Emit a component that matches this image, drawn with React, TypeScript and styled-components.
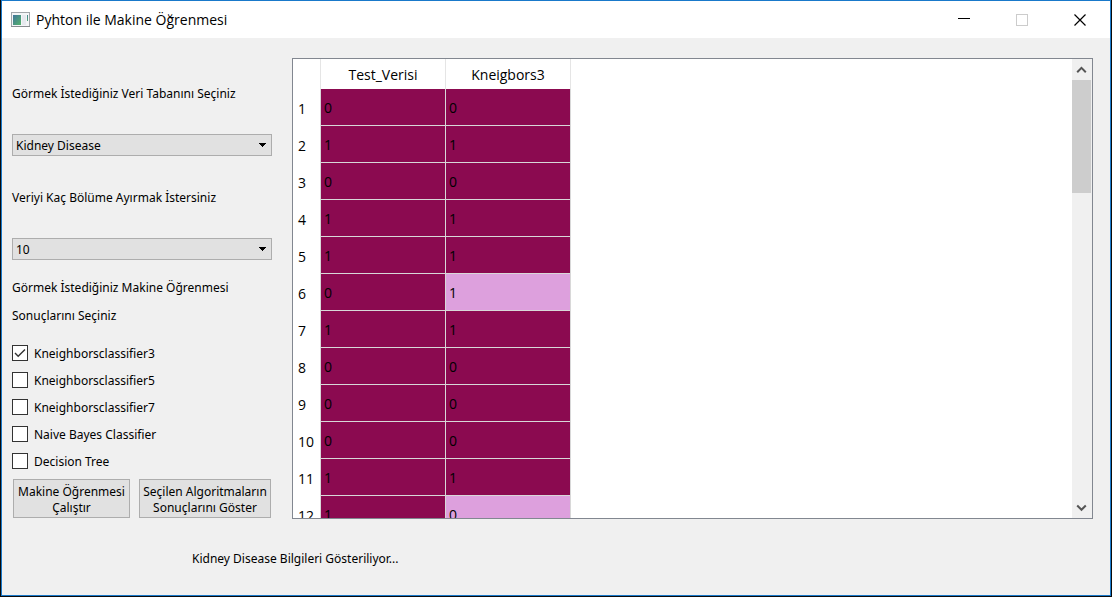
import React, { useState } from "react";
import styled, { createGlobalStyle } from "styled-components";

const uiFont = `"Noto Sans", "Open Sans", sans-serif`;
const headFont = `"Open Sans", "Noto Sans", sans-serif`;

const GlobalStyle = createGlobalStyle`
  * { box-sizing: border-box; }
  body { margin: 0; background: #0a0a0a; color: #000; }
  button, select, input { font: inherit; color: inherit; }
`;

const Desktop = styled.div`
  display: flex;
  height: 100vh;
  padding: 0 1px 1px;
`;

const Window = styled.div`
  flex: 1;
  min-width: 0;
  display: flex;
  flex-direction: column;
  border: 1px solid #1979ca;
  background: #f0f0f0;
  font-family: ${uiFont};
  font-size: 12px;
  line-height: 22px;
`;

const TitleBar = styled.header`
  display: flex;
  align-items: center;
  height: 37px;
  flex: none;
  padding: 0 1px 0 9px;
  background: #fff;
`;

const Title = styled.h1`
  flex: 1;
  margin: 0 0 0 6px;
  font: 400 14px/20px ${headFont};
`;

const WindowButton = styled.button`
  display: grid;
  place-items: center;
  width: 58px;
  height: 37px;
  padding: 0;
  border: 0;
  background: none;
`;

const Main = styled.main`
  flex: 1;
  min-height: 0;
  display: grid;
  grid-template-columns: 260px minmax(0, 1fr);
  grid-template-rows: minmax(0, 1fr);
  column-gap: 20px;
  padding: 20px 17px 0 10px;
`;

const Sidebar = styled.form`
  display: flex;
  flex-direction: column;
  padding-top: 25px;
`;

const Field = styled.div`
  display: flex;
  flex-direction: column;
  gap: 29px;
  margin-bottom: 31px;
`;

const SelectBox = styled.div`
  display: grid;
  align-items: center;

  & > * { grid-area: 1 / 1; }
  & > svg { justify-self: end; margin-right: 6px; pointer-events: none; }
`;

const Select = styled.select`
  appearance: none;
  width: 100%;
  height: 22px;
  padding: 1px 20px 0 3px;
  border: 1px solid #adadad;
  border-radius: 0;
  background: #e1e1e1;
  line-height: 20px;
`;

const Choices = styled.fieldset`
  margin: -17px 0 5px;
  padding: 0;
  border: 0;
`;

const Legend = styled.legend`
  width: 230px;
  margin-bottom: 9px;
  padding: 0;
  line-height: 28px;
`;

const Choice = styled.label`
  display: flex;
  align-items: center;
  gap: 6px;
  height: 27px;
`;

const ChoiceName = styled.span`
  padding-top: 2px;
`;

const Tick = styled.input`
  appearance: none;
  width: 16px;
  height: 16px;
  margin: 0;
  border: 1px solid #333;
  background: #fff;

  &:checked {
    background: #fff
      url("data:image/svg+xml,%3Csvg xmlns='http://www.w3.org/2000/svg' viewBox='0 0 14 14'%3E%3Cpath d='M2 7l3.200 3.300L12 3.500' fill='none' stroke='%23333' stroke-width='1.400'/%3E%3C/svg%3E");
  }
`;

const Actions = styled.div`
  display: flex;
  justify-content: space-between;
  padding: 0 1px;
`;

const Action = styled.button<{ $width: number }>`
  width: ${(p) => p.$width}px;
  height: 39px;
  padding: 2px 0 0;
  border: 1px solid #adadad;
  background: #e1e1e1;
  line-height: 16px;
  white-space: pre;
`;

const TableFrame = styled.section`
  display: flex;
  justify-content: space-between;
  overflow: hidden;
  border: 1px solid #828790;
  background: #fff;
`;

const Table = styled.table`
  width: 278px;
  height: max-content;
  table-layout: fixed;
  border-collapse: separate;
  border-spacing: 0;
  font: 400 14px/20px ${headFont};
`;

const ColumnHead = styled.th`
  height: 30px;
  padding: 2px 0 0;
  border-right: 1px solid #e5e5e5;
  font-weight: 400;
  text-align: center;
`;

const CornerHead = styled(ColumnHead)`
  width: 28px;
`;

const RowHead = styled.th`
  height: 37px;
  padding: 2px 0 0 5px;
  border-right: 1px solid #d8d8d8;
  font-weight: 400;
  text-align: left;
`;

const Cell = styled.td<{ $differs?: boolean }>`
  height: 37px;
  padding: 1px 3px 0;
  border-right: 1px solid #d8d8d8;
  border-bottom: 1px solid #d8d8d8;
  background: ${(p) => (p.$differs ? "#dda0dd" : "#8b0a50")};
`;

const ScrollBar = styled.div`
  display: flex;
  flex-direction: column;
  width: 20px;
  padding-right: 1px;
  background: #f0f0f0;
`;

const ScrollButton = styled.button`
  display: grid;
  place-items: center;
  height: 21px;
  padding: 0;
  border: 0;
  background: none;
`;

const ScrollTrack = styled.div`
  flex: 1;
`;

const ScrollThumb = styled.div`
  height: 27%;
  background: #cdcdcd;
`;

const Status = styled.footer`
  flex: none;
  padding: 29px 20px 25px 190px;
`;

const algorithms = [
  "Kneighborsclassifier3",
  "Kneighborsclassifier5",
  "Kneighborsclassifier7",
  "Naive Bayes Classifier",
  "Decision Tree",
];

const results = [
  [0, 0], [1, 1], [0, 0], [1, 1], [1, 1], [0, 1],
  [1, 1], [0, 0], [0, 0], [0, 0], [1, 1], [1, 0],
];

const AppIcon = () => (
  <svg width="19" height="15" viewBox="0 0 19 15" aria-hidden="true">
    <defs>
      <linearGradient id="pane" x1="0" y1="0" x2="1" y2="1">
        <stop offset="0" stopColor="#41759b" />
        <stop offset="1" stopColor="#55b36b" />
      </linearGradient>
    </defs>
    <rect x=".5" y=".5" width="18" height="14" fill="#f4f5f7" stroke="#a2a6aa" />
    <path d="M0 14.500h19" stroke="#888c90" />
    <rect x="2" y="3" width="8" height="10" fill="url(#pane)" />
    <rect x="11" y="3" width="4" height="10" fill="#e6e9ee" />
    <rect x="16" y="3" width="1" height="6" fill="url(#pane)" />
  </svg>
);

const DropArrow = () => (
  <svg width="7" height="4" viewBox="0 0 7 4" shapeRendering="crispEdges" aria-hidden="true">
    <path d="M0 0h7v1H6v1H5v1H4v1H3V3H2V2H1V1H0z" />
  </svg>
);

const Chevron = ({ down = false }: { down?: boolean }) => (
  <svg width="11" height="8" viewBox="0 0 11 8" aria-hidden="true">
    <path
      d={down ? "M1.200 1.500L5.500 5.800L9.800 1.500" : "M1.200 6.200L5.500 1.900L9.800 6.200"}
      fill="none"
      stroke="#555"
      strokeWidth="2"
    />
  </svg>
);

export default function App() {
  const [selected, setSelected] = useState<string[]>([algorithms[0]]);
  const toggle = (name: string) =>
    setSelected((s) => (s.includes(name) ? s.filter((n) => n !== name) : [...s, name]));

  return (
    <>
      <GlobalStyle />
      <Desktop>
        <Window>
          <TitleBar>
            <AppIcon />
            <Title>Pyhton ile Makine Öğrenmesi</Title>
            <WindowButton aria-label="Simge durumuna küçült">
              <svg width="12" height="12" shapeRendering="crispEdges">
                <path d="M0 4.500h12" stroke="#000" />
              </svg>
            </WindowButton>
            <WindowButton aria-label="Ekranı kapla" disabled>
              <svg width="12" height="12" shapeRendering="crispEdges">
                <rect x=".5" y=".5" width="11" height="11" fill="none" stroke="#ccc" />
              </svg>
            </WindowButton>
            <WindowButton aria-label="Kapat">
              <svg width="12" height="12">
                <path d="M.5.5l11 11M11.500.5l-11 11" stroke="#000" strokeWidth="1.200" />
              </svg>
            </WindowButton>
          </TitleBar>

          <Main>
            <Sidebar onSubmit={(e) => e.preventDefault()}>
              <Field>
                <label htmlFor="database">Görmek İstediğiniz Veri Tabanını Seçiniz</label>
                <SelectBox>
                  <Select id="database">
                    <option>Kidney Disease</option>
                  </Select>
                  <DropArrow />
                </SelectBox>
              </Field>
              <Field>
                <label htmlFor="folds">Veriyi Kaç Bölüme Ayırmak İstersiniz</label>
                <SelectBox>
                  <Select id="folds">
                    <option>10</option>
                  </Select>
                  <DropArrow />
                </SelectBox>
              </Field>
              <Choices>
                <Legend>Görmek İstediğiniz Makine Öğrenmesi Sonuçlarını Seçiniz</Legend>
                {algorithms.map((name) => (
                  <Choice key={name}>
                    <Tick
                      type="checkbox"
                      checked={selected.includes(name)}
                      onChange={() => toggle(name)}
                    />
                    <ChoiceName>{name}</ChoiceName>
                  </Choice>
                ))}
              </Choices>
              <Actions>
                <Action type="button" $width={117}>{"Makine Öğrenmesi\nÇalıştır"}</Action>
                <Action type="button" $width={132}>{"Seçilen Algoritmaların\nSonuçlarını Göster"}</Action>
              </Actions>
            </Sidebar>

            <TableFrame>
              <Table>
                <thead>
                  <tr>
                    <CornerHead />
                    <ColumnHead scope="col">Test_Verisi</ColumnHead>
                    <ColumnHead scope="col">Kneigbors3</ColumnHead>
                  </tr>
                </thead>
                <tbody>
                  {results.map(([actual, predicted], i) => (
                    <tr key={i}>
                      <RowHead scope="row">{i + 1}</RowHead>
                      <Cell>{actual}</Cell>
                      <Cell $differs={actual !== predicted}>{predicted}</Cell>
                    </tr>
                  ))}
                </tbody>
              </Table>
              <ScrollBar>
                <ScrollButton aria-label="Yukarı kaydır"><Chevron /></ScrollButton>
                <ScrollTrack><ScrollThumb /></ScrollTrack>
                <ScrollButton aria-label="Aşağı kaydır"><Chevron down /></ScrollButton>
              </ScrollBar>
            </TableFrame>
          </Main>

          <Status>Kidney Disease Bilgileri Gösteriliyor...</Status>
        </Window>
      </Desktop>
    </>
  );
}
